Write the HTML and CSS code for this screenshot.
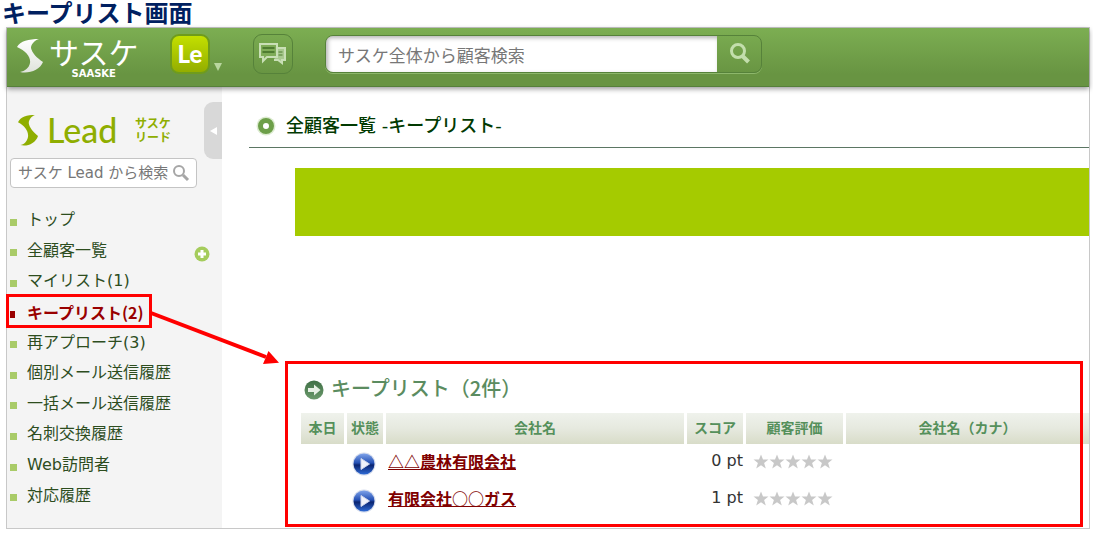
FILE: index.html
```html
<!DOCTYPE html>
<html lang="ja">

<head>
    <meta charset="UTF-8">
    <meta name="viewport" content="width=device-width, initial-scale=1.0">
    <title>キープリスト画面</title>
    <link rel="stylesheet" href="styles.css">
</head>

<body>
    <!-- shared icons -->
    <svg class="defs" width="0" height="0" aria-hidden="true">
        <defs>
            <linearGradient id="silver" x1="0" y1="0" x2="0" y2="1">
                <stop offset="0" stop-color="#fff" />
                <stop offset="1" stop-color="#dfe3dc" />
            </linearGradient>
            <linearGradient id="blue" x1="0" y1="0" x2="0" y2="1">
                <stop offset="0" stop-color="#7fa3ea" />
                <stop offset=".45" stop-color="#2450b4" />
                <stop offset=".55" stop-color="#0a2470" />
                <stop offset="1" stop-color="#2f6bd6" />
            </linearGradient>
            <linearGradient id="green" x1="0" y1="0" x2="0" y2="1">
                <stop offset="0" stop-color="#3f6f45" />
                <stop offset="1" stop-color="#6b9a6c" />
            </linearGradient>
        </defs>
        <symbol id="s-mark" viewBox="0 0 26 34" preserveAspectRatio="none">
            <path d="M22 0C12 0 3 2 0 8c9 4 14 10 13 16-1 5-5 8-10 9 9 2 20-2 23-10-6-4-11-9-12-14 0-4 4-8 8-9z" />
        </symbol>
        <symbol id="star" viewBox="0 0 16 16">
            <path d="M8 .5l2 5h5.500l-4.400 3.500 1.700 5.500L8 11.300l-4.800 3.200 1.700-5.500L.5 5.500H6z" />
        </symbol>
        <symbol id="play" viewBox="0 0 24 24">
            <circle cx="12" cy="12" r="11.500" fill="#d5dcec" />
            <circle cx="12" cy="12" r="10.500" fill="url(#blue)" />
            <path d="M9 6.500v11l8.500-5.500z" fill="#f1f3fa" stroke="#cfd6ec" />
        </symbol>
    </svg>

    <h1 class="page-title">キープリスト画面</h1>

    <div class="frame">
        <header class="header">
            <a class="brand" href="#" aria-label="サスケ">
                <svg class="brand-mark" width="26" height="34" fill="url(#silver)">
                    <use href="#s-mark" />
                </svg>
                <span class="brand-name">
                    <span class="brand-kana">サスケ</span>
                    <span class="brand-latin">SAASKE</span>
                </span>
            </a>
            <button class="app-btn" type="button">Le</button>
            <span class="caret"></span>
            <button class="chat-btn" type="button" aria-label="メッセージ">
                <svg width="30" height="24" viewBox="0 0 30 24" fill="none" stroke="#c9dfb6" stroke-width="2">
                    <path d="M20 6h7v12h-3v3l-4-3h-4" fill="#a9c98f" />
                    <path d="M2 2h17v13H9l-4 4v-4H2z" fill="#7fac58" />
                    <path d="M4.500 6h12M4.500 10h12" stroke="#4f7d31" />
                    <path d="M20.500 10h4M20.500 13h4" stroke="#4f7d31" stroke-width="1" />
                </svg>
            </button>
            <form class="search">
                <input type="text" placeholder="サスケ全体から顧客検索" aria-label="サスケ全体から顧客検索">
                <button type="button" aria-label="検索">
                    <svg width="24" height="24" viewBox="0 0 24 24" fill="none" stroke="#c3deac">
                        <circle cx="11" cy="9" r="6.500" stroke-width="3" />
                        <path d="M15.500 14l6 6" stroke-width="4" />
                    </svg>
                </button>
            </form>
        </header>

        <div class="layout">
            <aside class="sidebar">
                <button class="collapse" type="button" aria-label="閉じる"><i></i></button>
                <a class="lead" href="#">
                    <svg width="20" height="31" fill="#8fae00">
                        <use href="#s-mark" />
                    </svg>
                    <span class="lead-name">Lead</span>
                    <span class="lead-kana">サスケ<br>リード</span>
                </a>
                <form class="side-search">
                    <input type="text" placeholder="サスケ Lead から検索" aria-label="サスケ Lead から検索">
                    <button type="button" aria-label="検索">
                        <svg width="18" height="18" viewBox="0 0 18 18" fill="none" stroke="#a6a6a6">
                            <circle cx="7" cy="7" r="5" stroke-width="2" />
                            <path d="M11 11l5 5" stroke-width="3" />
                        </svg>
                    </button>
                </form>
                <ul class="menu">
                    <li><a href="#">トップ</a></li>
                    <li>
                        <a href="#">全顧客一覧</a>
                        <button class="add" type="button" aria-label="追加">
                            <svg width="16" height="16" viewBox="0 0 16 16">
                                <circle cx="8" cy="8" r="7.500" fill="#a5cc5c" />
                                <path d="M8 4v8M4 8h8" stroke="#fff" stroke-width="3" />
                            </svg>
                        </button>
                    </li>
                    <li><a href="#">マイリスト(1)</a></li>
                    <li class="active">
                        <a href="#">キープリスト(2)</a>
                        <svg class="arrow" width="132" height="56" viewBox="0 0 132 56" fill="red">
                            <path d="M1 2l115 44" stroke="red" stroke-width="4" />
                            <path d="M118.500 40L129 51.700 113 53z" />
                        </svg>
                    </li>
                    <li><a href="#">再アプローチ(3)</a></li>
                    <li><a href="#">個別メール送信履歴</a></li>
                    <li><a href="#">一括メール送信履歴</a></li>
                    <li><a href="#">名刺交換履歴</a></li>
                    <li><a href="#">Web訪問者</a></li>
                    <li><a href="#">対応履歴</a></li>
                </ul>
            </aside>

            <main class="main">
                <h2 class="heading">
                    <svg width="20" height="20" viewBox="0 0 20 20">
                        <circle cx="10" cy="10" r="9.500" fill="#dcebd0" />
                        <circle cx="10" cy="10" r="5.500" fill="#fff" stroke="#6d9f49" stroke-width="5" />
                    </svg>
                    全顧客一覧 -キープリスト-
                </h2>
                <div class="banner"></div>

                <section class="keep">
                    <h3 class="keep-title">
                        <svg width="20" height="20" viewBox="0 0 20 20">
                            <circle cx="10" cy="10" r="9.500" fill="url(#green)" />
                            <path d="M4 8h6V4.500l6.500 5.500-6.500 5.500V12H4z" fill="#e6efe4" />
                        </svg>
                        キープリスト（2件）
                    </h3>
                    <table class="list">
                        <thead>
                            <tr>
                                <th class="col-today">本日</th>
                                <th class="col-state">状態</th>
                                <th class="col-name">会社名</th>
                                <th class="col-score">スコア</th>
                                <th class="col-rank">顧客評価</th>
                                <th>会社名（カナ）</th>
                            </tr>
                        </thead>
                        <tbody>
                            <tr>
                                <td></td>
                                <td class="state"><svg width="24" height="24"><use href="#play" /></svg></td>
                                <td class="name"><a href="#">△△農林有限会社</a></td>
                                <td class="score">0 pt</td>
                                <td class="rank">
                                    <div class="stars">
                                        <svg><use href="#star" /></svg>
                                        <svg><use href="#star" /></svg>
                                        <svg><use href="#star" /></svg>
                                        <svg><use href="#star" /></svg>
                                        <svg><use href="#star" /></svg>
                                    </div>
                                </td>
                                <td></td>
                            </tr>
                            <tr>
                                <td></td>
                                <td class="state"><svg width="24" height="24"><use href="#play" /></svg></td>
                                <td class="name"><a href="#">有限会社○○ガス</a></td>
                                <td class="score">1 pt</td>
                                <td class="rank">
                                    <div class="stars">
                                        <svg><use href="#star" /></svg>
                                        <svg><use href="#star" /></svg>
                                        <svg><use href="#star" /></svg>
                                        <svg><use href="#star" /></svg>
                                        <svg><use href="#star" /></svg>
                                    </div>
                                </td>
                                <td></td>
                            </tr>
                        </tbody>
                    </table>
                </section>
            </main>
        </div>
    </div>
</body>

</html>
```
FILE: styles.css
```css
*,
*::before,
*::after {
    margin: 0;
    padding: 0;
    box-sizing: border-box;
}

body {
    min-height: 100vh;
    display: flex;
    flex-direction: column;
    padding: 0 3px 4px 6px;
    background-color: #fff;
    font-family: "DejaVu Sans", "Noto Sans CJK JP", sans-serif;
    font-size: 16px;
    color: #333;
}

a {
    color: inherit;
    text-decoration: none;
}

button {
    border: none;
    background: none;
    cursor: pointer;
}

svg {
    display: block;
    flex: none;
}

.defs {
    position: absolute;
}

.page-title {
    margin: 0 0 3px -4px;
    font: 700 24px/24px "Noto Sans CJK JP", sans-serif;
    color: #002060;
}

.frame {
    flex: 1;
    display: flex;
    flex-direction: column;
    border: 1px solid #c8c8c8;
}

/* header */
.header {
    position: relative;
    z-index: 2;
    display: flex;
    align-items: center;
    height: 59px;
    padding: 0 10px 6px;
    background: linear-gradient(#7cae52, #689442 80%);
    border-bottom: 1px solid #55803a;
    box-shadow: 0 2px 5px rgba(0, 0, 0, .4);
}

.brand {
    display: flex;
    align-items: center;
    gap: 6px;
    width: 153px;
    color: #fff;
}

.brand-mark {
    margin-top: 4px;
}

.brand-name {
    display: flex;
    flex-direction: column;
    align-items: center;
    padding-top: 3px;
}

.brand-kana {
    font: 400 30px/36px "Noto Sans CJK JP", sans-serif;
}

.brand-latin {
    font: 700 10px/9px "DejaVu Sans", sans-serif;
}

.app-btn,
.chat-btn {
    width: 40px;
    height: 40px;
    border-radius: 9px;
}

.app-btn {
    border: 2px solid #6f9c1c;
    background: linear-gradient(#c3e000, #93ad00);
    font: 900 24px/36px "Lato", sans-serif;
    color: #fff;
}

.caret {
    align-self: flex-end;
    margin: 0 31px 9px 4px;
    border: 4px solid transparent;
    border-top: 8px solid #b9d69f;
    border-bottom: none;
}

.chat-btn {
    display: flex;
    align-items: center;
    justify-content: center;
    border: 1px solid #56823a;
}

.search {
    display: flex;
    width: 437px;
    height: 38px;
    margin-left: 32px;
    border: 1px solid #56823a;
    border-radius: 8px;
    box-shadow: 0 1px 0 #8db76b;
    overflow: hidden;
}

.search input {
    flex: 1;
    min-width: 0;
    padding: 0 12px;
    border: none;
    background-color: #fff;
    box-shadow: inset 2px 2px 4px rgba(0, 0, 0, .3);
    font: 17px "Noto Sans CJK JP", sans-serif;
}

.search input::placeholder,
.side-search input::placeholder {
    color: #777;
    opacity: 1;
}

.search button {
    display: flex;
    align-items: center;
    justify-content: center;
    width: 44px;
}

.layout {
    flex: 1;
    display: flex;
}

/* sidebar */
.sidebar {
    position: relative;
    z-index: 1;
    flex: none;
    display: flex;
    flex-direction: column;
    width: 215px;
    padding: 25px 0 17px 3px;
    background-color: #f4f4f4;
}

.collapse {
    position: absolute;
    top: 15px;
    right: 0;
    display: flex;
    align-items: center;
    justify-content: center;
    width: 18px;
    height: 57px;
    border-radius: 9px 0 0 9px;
    background-color: #d8d8d8;
}

.collapse i {
    border: 4px solid transparent;
    border-right: 7px solid #fff;
    border-left: none;
}

.lead {
    display: flex;
    align-items: center;
    height: 36px;
    padding-left: 8px;
    color: #8fae00;
}

.lead-name {
    margin-left: 9px;
    width: 88px;
    font: 500 34px/36px "Lato", sans-serif;
}

.lead-kana {
    font: 700 12px/14px "Noto Sans CJK JP", sans-serif;
}

.side-search {
    display: flex;
    align-items: center;
    width: 187px;
    height: 30px;
    margin: 10px 0 17px;
    padding-right: 6px;
    border: 1px solid #c4c4c4;
    border-radius: 4px;
    background-color: #fff;
}

.side-search input {
    flex: 1;
    min-width: 0;
    padding-left: 7px;
    border: none;
    background: none;
    font: 15px/28px "DejaVu Sans", "Noto Sans CJK JP", sans-serif;
}

.menu {
    flex: 1;
    display: flex;
    flex-direction: column;
    list-style: none;
    color: #2d4d1e;
}

.menu li {
    position: relative;
    flex: 1;
    display: flex;
    align-items: center;
    line-height: 24px;
}

.menu li::before {
    content: "";
    width: 7px;
    height: 7px;
    margin: 4px 10px 0 0;
    background-color: #a9cb68;
}

.menu .add {
    margin: 6px 12px 0 auto;
}

.menu .active {
    font-family: "Noto Sans CJK JP", sans-serif;
    font-weight: 700;
    color: #900;
}

.menu .active::before {
    width: 5px;
    margin-right: 12px;
    background-color: #900;
}

/* red callouts */
.menu .active::after {
    content: "";
    position: absolute;
    inset: -3px auto -1px -4px;
    width: 146px;
    border: 3px solid red;
}

.arrow {
    position: absolute;
    top: 14px;
    left: 140px;
}

/* main */
.main {
    flex: 1;
    min-width: 0;
    display: flex;
    flex-direction: column;
    overflow: hidden;
}

.heading {
    display: flex;
    align-items: center;
    gap: 10px;
    margin: 24px 0 20px 27px;
    padding: 0 0 6px 7px;
    border-bottom: 1px solid #5b7663;
    font: 500 18px/30px "DejaVu Sans", "Noto Sans CJK JP", sans-serif;
    color: #013a01;
}

.banner {
    height: 68px;
    margin-left: 73px;
    background-color: #a5cb00;
}

.keep {
    position: relative;
    flex: 1;
    margin: 125px 0 0 63px;
    padding: 12px 0 0 13px;
}

.keep::after {
    content: "";
    position: absolute;
    inset: 0 6px 1px 0;
    border: 3px solid red;
    pointer-events: none;
}

.keep-title {
    display: flex;
    align-items: center;
    gap: 7px;
    margin-bottom: 7px;
    padding-left: 6px;
    font: 500 20px/30px "Noto Sans CJK JP", sans-serif;
    color: #5b8c60;
}

.keep-title svg {
    margin-top: 4px;
}

.list {
    table-layout: fixed;
    width: calc(100% + 3px);
    border-spacing: 3px;
}

.list th {
    height: 31px;
    padding-bottom: 4px;
    background: linear-gradient(#eff2ec, #e6e9df 50%, #d8dcc8);
    font: 700 14px/26px "Noto Sans CJK JP", sans-serif;
    color: #55905b;
}

.list td {
    height: 34px;
    line-height: 28px;
    vertical-align: top;
}

.col-today {
    width: 43px;
}

.col-state {
    width: 36px;
}

.col-name {
    width: 298px;
}

.col-score {
    width: 56px;
}

.col-rank {
    width: 97px;
}

.list .state {
    padding: 5px 0 0 5px;
}

.list .name {
    padding-left: 2px;
    font-family: "Noto Sans CJK JP", sans-serif;
    font-weight: 700;
    color: #800000;
}

.list .name a {
    text-decoration: underline;
}

.list .score {
    text-align: right;
}

.stars {
    display: flex;
    padding: 7px 0 0 7px;
    fill: #c8c8c8;
}

.stars svg {
    width: 16px;
    height: 16px;
}
```
